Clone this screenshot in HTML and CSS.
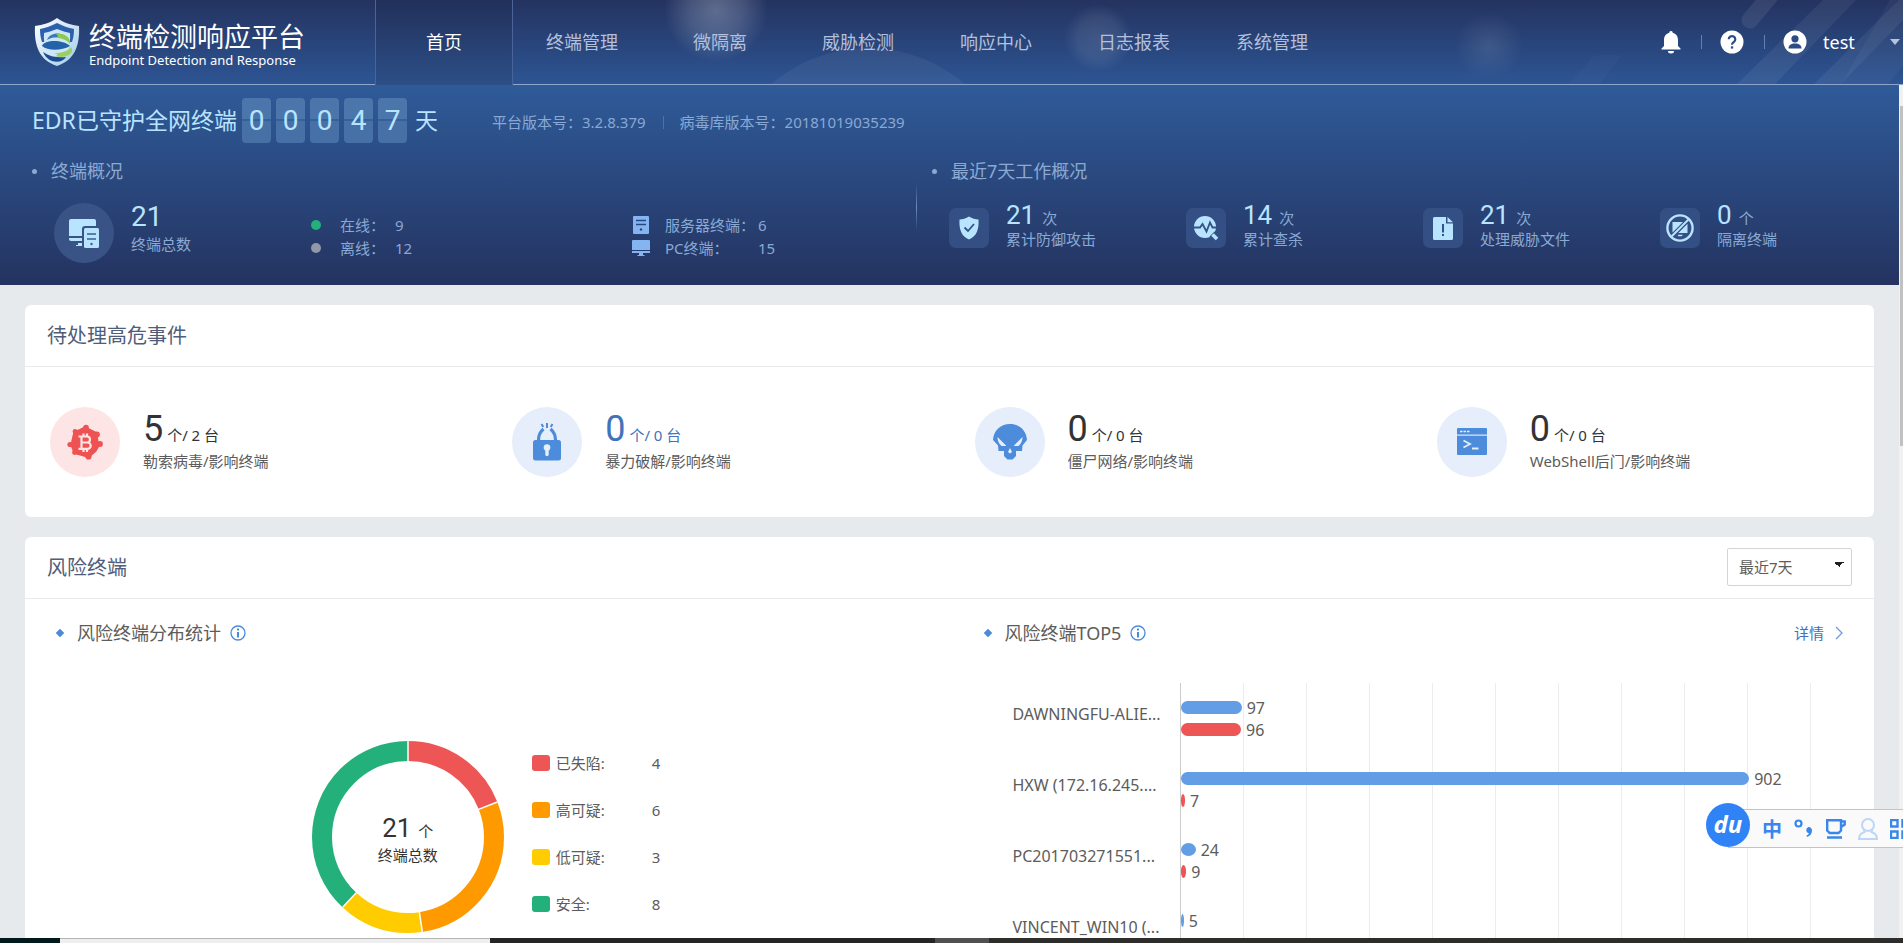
FILE: index.html
```html
<!DOCTYPE html>
<html lang="zh-CN">
<head>
<meta charset="utf-8">
<title>终端检测响应平台</title>
<link rel="stylesheet" href="styles.css">
</head>
<body>
<header class="topbar">
  <svg class="topbar-decor" viewBox="0 0 1903 84" preserveAspectRatio="none" aria-hidden="true">
    <defs>
      <radialGradient id="glow"><stop offset="0" stop-color="#fff" stop-opacity=".26"/><stop offset=".5" stop-color="#fff" stop-opacity=".16"/><stop offset="1" stop-color="#fff" stop-opacity="0"/></radialGradient>
      <radialGradient id="glow2"><stop offset="0" stop-color="#fff" stop-opacity=".11"/><stop offset=".6" stop-color="#fff" stop-opacity=".08"/><stop offset="1" stop-color="#fff" stop-opacity="0"/></radialGradient>
      <radialGradient id="glow3"><stop offset="0" stop-color="#fff" stop-opacity=".1"/><stop offset="1" stop-color="#fff" stop-opacity="0"/></radialGradient>
    </defs>
    <circle cx="716" cy="10" r="52" fill="url(#glow)"/>
    <circle cx="1098" cy="38" r="34" fill="url(#glow2)"/>
    <circle cx="1489" cy="46" r="34" fill="url(#glow3)"/>
    <circle cx="868" cy="196" r="148" fill="#fff" fill-opacity=".05"/>
    <path d="M1775 -10L1750 20" stroke="#fff" stroke-opacity=".08" stroke-width="17" stroke-linecap="round"/>
    <path d="M1823 0H1856L1775 84H1737zM1903 0V20L1841 84H1814L1899 0z" fill="#fff" fill-opacity=".06"/>
    <path d="M1903 0V66L1888 84H1841L1890 0z" fill="#fff" fill-opacity=".04"/>
    <path d="M1595 55H1622L1600 84H1568z" fill="#fff" fill-opacity=".02"/>
  </svg>
  <div class="brand">
    <svg class="brand-logo" viewBox="0 0 46 50" aria-hidden="true">
      <defs><linearGradient id="sh" x1="0" y1="0" x2="1" y2="1"><stop offset="0" stop-color="#fff"/><stop offset="1" stop-color="#9fcbe8"/></linearGradient></defs>
      <path d="M23 1C30 6 37 8 45 9C46 28 41 43 23 49C5 43 0 28 1 9C9 8 16 6 23 1z" fill="url(#sh)"/>
      <path d="M23 6C29 9 34 11 40 12C40 18 39 22 38 25H8C7 22 6 18 6 12C12 11 17 9 23 6z" fill="#2c5fae"/>
      <path d="M23 12C28 14 32 15 36 16C37 28 33 40 23 45C13 40 9 28 10 16C14 15 18 14 23 12z" fill="#cfe6f7"/>
      <path d="M13 23C16 15 29 14 35 23C29 20 20 19 13 23z" fill="#3779bd"/>
      <path d="M22 17C31 16 37 21 36 27C32 22 27 21 21 21C24 20 25 19 22 17z" fill="#8ccb4c"/>
      <path d="M8 29C10 23 28 22 36 29C27 34 14 34 8 29z" fill="#2462aa"/>
      <path d="M20 36C28 36 34 34 37 30C42 37 30 42 21 39C25 38 24 37 20 36z" fill="#9bcf63"/>
      <path d="M9 35C16 40 25 41 32 40C28 47 14 47 9 35z" fill="#1d4b93"/>
    </svg>
    <div class="brand-text"><div class="brand-title">终端检测响应平台</div><div class="brand-sub">Endpoint Detection and Response</div></div>
  </div>
  <nav class="nav">
    <a class="nav-item is-active" href="#">首页</a>
    <a class="nav-item" href="#">终端管理</a>
    <a class="nav-item" href="#">微隔离</a>
    <a class="nav-item" href="#">威胁检测</a>
    <a class="nav-item" href="#">响应中心</a>
    <a class="nav-item" href="#">日志报表</a>
    <a class="nav-item" href="#">系统管理</a>
  </nav>
  <div class="tools">
    <button class="tool" aria-label="通知"><svg width="20" height="24" viewBox="0 0 20 24"><path d="M10 1a1.600 1.600 0 0 1 1.700 1.700C15 3.500 17 6.300 17 10v6l2.500 2.500V19.500H.5V18.500L3 16v-6C3 6.300 5 3.500 8.300 2.700A1.600 1.600 0 0 1 10 1zM7 21h6a3 2.500 0 0 1-6 0z" fill="#fff"/></svg></button>
    <button class="tool" aria-label="帮助"><svg width="24" height="24" viewBox="0 0 24 24"><circle cx="12" cy="12" r="11.500" fill="#fff"/><path d="M8.700 9.300a3.300 3.300 0 1 1 5 2.900c-1.200.8-1.700 1.200-1.700 2.600" fill="none" stroke="#2b4c88" stroke-width="2.200"/><rect x="10.900" y="16.300" width="2.300" height="2.300" fill="#2b4c88"/></svg></button>
    <button class="tool user" type="button"><svg width="24" height="24" viewBox="0 0 24 24"><circle cx="12" cy="12" r="11.500" fill="#fff"/><circle cx="12" cy="8.800" r="3.600" fill="#2b4c88"/><path d="M5.500 18.500c0-3.500 2.500-5 6.500-5s6.500 1.500 6.500 5z" fill="#2b4c88"/></svg><span class="user-name">test</span><svg class="user-caret" width="10" height="6" viewBox="0 0 10 6"><path d="M0 0h10L5 6z" fill="#b5c3dd"/></svg></button>
  </div>
</header>

<div class="viewport">
  <main class="content">
    <section class="banner">
      <div class="guard">
        <span class="guard-label">EDR已守护全网终端</span>
        <span class="digits"><span class="digit">0</span><span class="digit">0</span><span class="digit">0</span><span class="digit">4</span><span class="digit">7</span></span>
        <span class="guard-unit">天</span>
        <span class="version">平台版本号：3.2.8.379</span>
        <span class="version version-next">病毒库版本号：20181019035239</span>
      </div>
      <div class="overview">
        <div class="overview-left">
          <h2 class="dot-title">终端概况</h2>
          <div class="terminals">
            <div class="total">
              <span class="total-icon"><svg width="32" height="32" viewBox="0 0 32 32"><path d="M3 2H26a2 2 0 0 1 2 2V9H17a3 3 0 0 0-3 3V19H1V4A2 2 0 0 1 3 2zM1 21H14V24H3A2 2 0 0 1 1 22zM10 26H14V29H8V28H10z" fill="#b9e4ff"/><rect x="16" y="11" width="15" height="20" rx="1.500" fill="#b9e4ff"/><path d="M19 17H28M19 22H28" stroke="#3a5c92" stroke-width="1.500"/><circle cx="23.500" cy="27" r="1.200" fill="#3a5c92"/></svg></span>
              <div class="total-text"><div class="num-xl">21</div><div class="label">终端总数</div></div>
            </div>
            <dl class="pairs status">
              <dt><i class="led led-on"></i>在线：</dt><dd>9</dd>
              <dt><i class="led led-off"></i>离线：</dt><dd>12</dd>
            </dl>
            <dl class="pairs kinds">
              <dt><svg width="18" height="18" viewBox="0 0 18 18"><rect x="1" y="0" width="16" height="18" rx="1" fill="#85b4f3"/><path d="M4 4.500H14M4 8.500H14" stroke="#2b4780" stroke-width="1.500"/><circle cx="9" cy="13.500" r="1.200" fill="#2b4780"/></svg>服务器终端：</dt><dd>6</dd>
              <dt><svg width="18" height="18" viewBox="0 0 18 18"><path d="M1 1H17a1 1 0 0 1 1 1V11H0V2A1 1 0 0 1 1 1zM0 12H18V14H11V16H12.500V17H5.500V16H7V14H0z" fill="#85b4f3"/></svg>PC终端：</dt><dd>15</dd>
            </dl>
          </div>
        </div>
        <div class="overview-right">
          <h2 class="dot-title">最近7天工作概况</h2>
          <div class="works">
            <div class="work"><span class="tile"><svg width="22" height="24" viewBox="0 0 22 24"><path d="M11 0.500C14 2.500 17.500 3.200 20.500 3.500C21 13 19 20 11 23.500C3 20 1 13 1.500 3.500C4.500 3.200 8 2.500 11 .5z" fill="#b9e4ff"/><path d="M6.500 11.500L10 15L16 8" fill="none" stroke="#32528a" stroke-width="1.800"/></svg></span><div><div class="num-l">21<span class="unit">次</span></div><div class="label">累计防御攻击</div></div></div>
            <div class="work"><span class="tile"><svg width="26" height="26" viewBox="0 0 26 26"><circle cx="12" cy="12" r="11" fill="#b9e4ff"/><path d="M0 12.500H7L9.500 9L13.500 16.500L17 7.500L19.500 12.500H24" fill="none" stroke="#32528a" stroke-width="1.800"/><path d="M19 19L24.500 24.500" stroke="#32528a" stroke-width="7"/><path d="M19.500 19.500L24 24" stroke="#b9e4ff" stroke-width="3.600"/></svg></span><div><div class="num-l">14<span class="unit">次</span></div><div class="label">累计查杀</div></div></div>
            <div class="work"><span class="tile"><svg width="20" height="23" viewBox="0 0 20 23"><path d="M1.500 0H13V6.500H20V21.500A1.500 1.500 0 0 1 18.500 23H1.500A1.500 1.500 0 0 1 0 21.500V1.500A1.500 1.500 0 0 1 1.500 0zM14.500 0L20 5.200H14.500z" fill="#b9e4ff"/><path d="M10 7V15.500M10 17V19" stroke="#32528a" stroke-width="2"/></svg></span><div><div class="num-l">21<span class="unit">次</span></div><div class="label">处理威胁文件</div></div></div>
            <div class="work"><span class="tile"><svg width="28" height="28" viewBox="0 0 28 28"><circle cx="14" cy="14" r="12.600" fill="none" stroke="#b9e4ff" stroke-width="2.400"/><path d="M6.500 8H17L6.500 18.500zM21.500 9.800V19H12.300zM11.500 20.800H17L15.500 22.300H12.500z" fill="#b9e4ff"/><path d="M5.500 22.500L22.500 5.500" stroke="#b9e4ff" stroke-width="2"/></svg></span><div><div class="num-l">0<span class="unit">个</span></div><div class="label">隔离终端</div></div></div>
          </div>
        </div>
      </div>
    </section>

    <section class="card">
      <div class="card-head"><h2 class="card-title">待处理高危事件</h2></div>
      <div class="events">
        <a class="event" href="#">
          <span class="event-icon is-danger"><svg width="36" height="36" viewBox="0 0 36 36"><path d="M18 3.500L22 5.500L29 9L30.500 17L32 21L28.500 27L21.500 33L15 31L7.500 29L4.500 21L6 14L7.500 8L13 6z" fill="#ee5252" stroke="#ee5252" stroke-width="2" stroke-linejoin="round"/><g fill="#ee5252"><circle cx="19" cy="3.500" r="2.800"/><circle cx="8" cy="7.500" r="2.400"/><circle cx="30" cy="10.500" r="2.900"/><circle cx="33" cy="20" r="2.900"/><circle cx="3" cy="20.500" r="2.600"/><circle cx="7.500" cy="28.500" r="2.400"/><circle cx="21.500" cy="32.500" r="3.100"/></g><path d="M11.500 12.500H20a3 3 0 0 1 0 6H15H20.500a3.200 3.200 0 0 1 0 6.400H11.500M14.500 12.500V25M16.500 9.500V12M20 9.500V12M16.500 25V28M20 25V28" fill="none" stroke="#fde5e5" stroke-width="2.200"/></svg></span>
          <div><div class="event-num"><b class="num-xxl">5</b> 个/ 2 台</div><div class="event-label">勒索病毒/影响终端</div></div>
        </a>
        <a class="event is-hover" href="#">
          <span class="event-icon"><svg width="28" height="38" viewBox="0 0 28 38"><rect x="0" y="17" width="28" height="20.500" rx="2.500" fill="#4c8cdb"/><path d="M5.500 17C5.500 11 7.500 8.500 10.500 6M22.500 17C22.500 11 20.500 8.500 17.500 6" fill="none" stroke="#4c8cdb" stroke-width="3.200"/><path d="M8.500 1L10.300 4M14 0V5M19.500 1L17.700 4" stroke="#4c8cdb" stroke-width="2"/><circle cx="14" cy="24.500" r="3.300" fill="#e5eefa"/><path d="M12.300 26H15.700V31.500A1.700 1.700 0 0 1 12.300 31.500z" fill="#e5eefa"/></svg></span>
          <div><div class="event-num"><b class="num-xxl">0</b> 个/ 0 台</div><div class="event-label">暴力破解/影响终端</div></div>
        </a>
        <a class="event" href="#">
          <span class="event-icon"><svg width="36" height="36" viewBox="0 0 36 36"><path d="M18 0C28 0 34.500 7 35 16L30.500 21.500L30 27H24V32L20.500 35.500H15.500L12 32V27H6.500L6 21.500L1 16C1.500 7 8 0 18 0z" fill="#4c8cdb"/><path d="M5.500 13L14 21.500V22H9.500C7 20 5.500 17 5.500 13zM30.500 13L22 21.500V22H26.500C29 20 30.500 17 30.500 13zM18 24L20 28L18 29.600L16 28z" fill="#e5eefa"/></svg></span>
          <div><div class="event-num"><b class="num-xxl">0</b> 个/ 0 台</div><div class="event-label">僵尸网络/影响终端</div></div>
        </a>
        <a class="event" href="#">
          <span class="event-icon"><svg width="30" height="28" viewBox="0 0 30 28"><path d="M1 0H29a1 1 0 0 1 1 1V6H0V1A1 1 0 0 1 1 0zM0 8H30V26a1 1 0 0 1-1 1H1a1 1 0 0 1-1-1z" fill="#4c8cdb"/><path d="M0 6.800H30" stroke="#8db6ea" stroke-width="1.500"/><path d="M3 3.500H5.500M6.500 3.500H9M10 3.500H12.500" stroke="#e5eefa" stroke-width="1.600"/><path d="M6.500 12.500L13 16L6.500 19.500M15 20.500H21.500" fill="none" stroke="#e5eefa" stroke-width="1.800"/></svg></span>
          <div><div class="event-num"><b class="num-xxl">0</b> 个/ 0 台</div><div class="event-label">WebShell后门/影响终端</div></div>
        </a>
      </div>
    </section>

    <section class="card">
      <div class="card-head">
        <h2 class="card-title">风险终端</h2>
        <select class="range" aria-label="时间范围"><option>最近7天</option></select>
      </div>
      <div class="risk">
        <div class="panel">
          <h3 class="panel-title"><i class="diamond"></i>风险终端分布统计<svg class="info" width="16" height="16" viewBox="0 0 16 16"><circle cx="8" cy="8" r="7" fill="none" stroke="#4b8ad8" stroke-width="1.300"/><path d="M8 3.500V5.500M8 7V12.500" stroke="#4b8ad8" stroke-width="2"/></svg></h3>
          <div class="distribution">
            <div class="donut">
              <svg width="192" height="192" viewBox="0 0 192 192">
                <g fill="none" stroke-width="20" transform="rotate(-90 96 96)">
                  <circle cx="96" cy="96" r="86" pathLength="21" stroke="#ee5555" stroke-dasharray="4 17"/>
                  <circle cx="96" cy="96" r="86" pathLength="21" stroke="#ff9900" stroke-dasharray="6 15" stroke-dashoffset="-4"/>
                  <circle cx="96" cy="96" r="86" pathLength="21" stroke="#ffcc00" stroke-dasharray="3 18" stroke-dashoffset="-10"/>
                  <circle cx="96" cy="96" r="86" pathLength="21" stroke="#23b07b" stroke-dasharray="8 13" stroke-dashoffset="-13"/>
                </g>
                <g stroke="#fff" stroke-width="1.500">
                  <path d="M96 0V21"/><path d="M96 0V21" transform="rotate(68.600 96 96)"/><path d="M96 0V21" transform="rotate(171.400 96 96)"/><path d="M96 0V21" transform="rotate(222.900 96 96)"/>
                </g>
              </svg>
              <div class="donut-text"><div class="num-l donut-num">21<span class="unit">个</span></div><div>终端总数</div></div>
            </div>
            <ul class="legend">
              <li><i class="swatch sw-red"></i><span>已失陷:</span><span>4</span></li>
              <li><i class="swatch sw-orange"></i><span>高可疑:</span><span>6</span></li>
              <li><i class="swatch sw-yellow"></i><span>低可疑:</span><span>3</span></li>
              <li><i class="swatch sw-green"></i><span>安全:</span><span>8</span></li>
            </ul>
          </div>
        </div>
        <div class="panel panel-top5">
          <h3 class="panel-title"><i class="diamond"></i>风险终端TOP5<svg class="info" width="16" height="16" viewBox="0 0 16 16"><circle cx="8" cy="8" r="7" fill="none" stroke="#4b8ad8" stroke-width="1.300"/><path d="M8 3.500V5.500M8 7V12.500" stroke="#4b8ad8" stroke-width="2"/></svg>
            <a class="more" href="#">详情<svg width="8" height="14" viewBox="0 0 8 14"><path d="M1 1L7 7L1 13" fill="none" stroke="#6f9bd8" stroke-width="1.300"/></svg></a></h3>
          <div class="chart">
            <div class="gridlines" aria-hidden="true"><i></i><i></i><i></i><i></i><i></i><i></i><i></i><i></i><i></i><i></i></div>
            <div class="host"><span class="host-name">DAWNINGFU-ALIE...</span><div class="bars"><div class="bar"><i class="fill" style="width:9.7%"></i>97</div><div class="bar"><i class="fill fill-red" style="width:9.6%"></i>96</div></div></div>
            <div class="host"><span class="host-name">HXW (172.16.245....</span><div class="bars"><div class="bar"><i class="fill" style="width:90.2%"></i>902</div><div class="bar"><i class="fill fill-red fill-tiny" style="width:0.7%"></i>7</div></div></div>
            <div class="host"><span class="host-name">PC201703271551...</span><div class="bars"><div class="bar"><i class="fill fill-tiny" style="width:2.4%"></i>24</div><div class="bar"><i class="fill fill-red fill-tiny" style="width:0.9%"></i>9</div></div></div>
            <div class="host"><span class="host-name">VINCENT_WIN10 (...</span><div class="bars"><div class="bar"><i class="fill fill-tiny" style="width:0.5%"></i>5</div><div class="bar"></div></div></div>
          </div>
        </div>
      </div>
    </section>
  </main>
  <div class="scrollbar" aria-hidden="true"><i class="thumb"></i></div>
</div>

<footer class="taskbar" aria-hidden="true"><i class="task-start"></i><i class="task-search"></i><i class="task-rest"></i><i class="task-app"></i><i class="task-end"></i></footer>

<div class="ime">
  <span class="ime-logo">du</span>
  <span class="ime-zh">中</span>
  <svg width="20" height="20" viewBox="0 0 20 20"><circle cx="4.500" cy="4.500" r="3" fill="none" stroke="#3a86ea" stroke-width="2.200"/><path d="M14.500 8a3.300 3.300 0 0 1 3.500 3.500c0 3.500-2 5.500-5 6.500l-.5-1.500c1.500-.6 2.300-1.300 2.300-2.300A3.200 3.200 0 0 1 14.500 8z" fill="#3a86ea"/></svg>
  <svg width="20" height="20" viewBox="0 0 20 20"><path d="M1.200 1.200H15V11.500L12.500 14H3.700L1.200 11.500zM15 2.500H18.700V5.500L15 8M1 18.500H16" fill="none" stroke="#3a86ea" stroke-width="2.400"/></svg>
  <svg width="20" height="22" viewBox="0 0 20 22"><circle cx="10" cy="7" r="6" fill="none" stroke="#bdd6f7" stroke-width="2"/><path d="M6 12L6.500 14C3 15 1 17 1 21H19C19 17 17 15 13.500 14L14 12" fill="none" stroke="#bdd6f7" stroke-width="2"/></svg>
  <svg width="20" height="20" viewBox="0 0 20 20"><path d="M1 1H7.500V7.500H1zM12.500 1H19V7.500H12.500zM1 12.500H7.500V19H1zM12.500 12.500H19V19H12.500z" fill="none" stroke="#3a86ea" stroke-width="2.400"/></svg>
</div>
</body>
</html>
```
FILE: styles.css
```css
* { box-sizing: border-box; }
body {
  margin: 0;
  height: 100vh;
  display: flex;
  flex-direction: column;
  overflow: hidden;
  background: #e6eaed;
  color: #5c5c5c;
  font: 15px/20px "Noto Sans", "Noto Sans CJK SC", sans-serif;
}
h2, h3, dl, dd, ul { margin: 0; padding: 0; font-weight: normal; }
a { color: inherit; text-decoration: none; }
button { border: 0; background: none; padding: 0; color: inherit; font: inherit; }
svg { display: block; flex: none; }

/* header */
.topbar {
  position: relative;
  flex: none;
  display: flex;
  height: 85px;
  background: linear-gradient(#243360, #2d5594);
  border-bottom: 1px solid #8fa3cb;
}
.topbar-decor { position: absolute; inset: 0; width: 100%; height: 100%; }
.brand { position: relative; display: flex; align-items: center; gap: 9px; width: 375px; padding-left: 34px; }
.brand-logo { width: 46px; height: 50px; }
.brand-text { color: #fff; padding-top: 10px; }
.brand-title { font: 27px/26px "Liberation Sans", "Noto Sans CJK SC", sans-serif; white-space: nowrap; }
.brand-sub { font-size: 13px; line-height: 18px; white-space: nowrap; }
.nav { position: relative; display: flex; }
.nav-item {
  width: 138px;
  line-height: 84px;
  text-align: center;
  font-size: 18px;
  color: #b4c0dc;
}
.nav-item.is-active {
  height: 85px;
  color: #fff;
  background: linear-gradient(#22305b, #2c4f87);
  border: solid #4a6499;
  border-width: 0 1px;
}
.tools { position: relative; display: flex; align-items: center; margin-left: auto; padding-right: 3px; }
.tool { display: flex; align-items: center; }
.tool + .tool { margin-left: 20px; padding-left: 19px; background: linear-gradient(#6480b2, #6480b2) left center / 1px 14px no-repeat; }
.user-name { margin-left: 16px; width: 67px; text-align: left; font-size: 18px; color: #fff; }

/* scrolling area */
.viewport { flex: 1; min-height: 0; display: flex; }
.content { flex: 1; min-width: 0; overflow: hidden; }
.scrollbar { width: 4px; padding: 21px 0 0 1px; background: #f1f1f1; }
.thumb { display: block; height: 340px; background: #c1c1c1; }

/* banner */
.banner { height: 200px; padding: 13px 0 0 32px; background: linear-gradient(#2f5b99, #243360); color: #89a9d5; }
.guard { display: flex; align-items: center; height: 45px; }
.guard-label, .guard-unit { font-size: 23px; line-height: 30px; padding-bottom: 2px; color: #b9e4ff; }
.guard-label { width: 210px; white-space: nowrap; }
.digits { display: flex; gap: 5px; }
.digit {
  width: 29px;
  height: 45px;
  border-radius: 4px;
  background: linear-gradient(#4b76ab 0 21px, #34609c 21px 23px, #4670a6 23px);
  font: 28px/45px Roboto, sans-serif;
  text-align: center;
  color: #b9e4ff;
}
.guard-unit { margin-left: 8px; width: 77px; }
.version { padding-top: 3px; }
.version-next { margin-left: 17px; padding-left: 17px; background: linear-gradient(#4a72ac, #4a72ac) left 7px / 1px 13px no-repeat; }
.overview { display: flex; margin-top: 16px; }
.overview-left { width: 884px; }
.overview-right { position: relative; flex: 1; padding-left: 16px; }
.overview-right::before {
  content: "";
  position: absolute;
  left: 0;
  top: 24px;
  width: 1px;
  height: 48px;
  background: linear-gradient(transparent, #6b8abc, transparent);
}
.dot-title { display: flex; align-items: center; gap: 14px; font-size: 18px; line-height: 24px; color: #8aa9d3; }
.dot-title::before { content: ""; width: 5px; height: 5px; border-radius: 50%; background: #8aa9d3; }
.terminals { display: flex; align-items: center; margin-top: 19px; padding-left: 22px; }
.total { display: flex; align-items: center; gap: 17px; width: 257px; height: 62px; }
.total-icon { display: grid; place-items: center; width: 60px; height: 60px; border-radius: 50%; background: #3a5387; }
.total-text { padding-bottom: 5px; }
.num-xl, .num-l { font-family: Roboto, sans-serif; color: #b9e4ff; }
.num-xl { font-size: 28px; line-height: 22px; margin-bottom: 5px; }
.num-l { font-size: 26px; line-height: 24px; white-space: nowrap; }
.unit { margin-left: 7px; font: 15px/20px "Noto Sans CJK SC", sans-serif; color: #89a9d5; }
.label { line-height: 22px; }
.pairs { display: grid; grid-template-columns: auto 1fr; row-gap: 1px; line-height: 22px; padding-top: 6px; }
.pairs dt { display: flex; align-items: center; white-space: nowrap; }
.status { grid-template-columns: 84px 1fr; width: 321px; }
.status dt { gap: 19px; }
.kinds { grid-template-columns: 126px 1fr; }
.kinds dt { gap: 15px; }
.led { width: 10px; height: 10px; border-radius: 50%; }
.led-on { background: #23b07b; }
.led-off { background: #9297a9; }
.works { display: grid; grid-template-columns: repeat(4, 1fr); margin-top: 20px; padding: 0 2px 0 17px; }
.work { display: flex; gap: 17px; }
.tile { display: grid; place-items: center; width: 40px; height: 40px; margin-top: 5px; border-radius: 7px; background: #344f83; }

/* cards */
.card { margin: 20px 25px 0; background: #fff; border-radius: 6px; }
.card-head { display: flex; align-items: center; justify-content: space-between; height: 62px; padding: 0 22px; border-bottom: 1px solid #e8eaec; }
.card-title { font-size: 20px; line-height: 28px; color: #4f5d78; }
.range {
  appearance: none;
  width: 125px;
  height: 38px;
  margin-bottom: 2px;
  padding: 0 11px;
  border: 1px solid #d2d4d8;
  border-radius: 2px;
  background:
    linear-gradient(to bottom left, #222 50%, transparent 50%) right 12px top 13px / 5px 5px no-repeat,
    linear-gradient(to bottom right, #222 50%, transparent 50%) right 7px top 13px / 5px 5px no-repeat,
    #fff;
  font: inherit;
  color: #5c5c5c;
}
.events { display: grid; grid-template-columns: repeat(4, 1fr); height: 150px; align-items: center; }
.event { display: flex; align-items: center; gap: 23px; padding-left: 25px; }
.event-icon { display: grid; place-items: center; width: 70px; height: 70px; border-radius: 50%; background: #e5eefa; }
.event-icon.is-danger { background: #fde5e5; }
.event-num { font-size: 15px; line-height: 32px; color: #333; }
.num-xxl { font: 36px/32px Roboto, sans-serif; }
.is-hover .event-num { color: #4272b8; }
.event-label { line-height: 20px; }

/* risk */
.risk { display: grid; grid-template-columns: 1fr 1fr; }
.panel-title { display: flex; align-items: center; height: 28px; margin-top: 20px; padding-left: 32px; font-size: 18px; line-height: 28px; color: #5c5c5c; }
.panel-top5 .panel-title { padding: 0 31px 0 35px; }
.diamond { width: 6px; height: 6px; margin-right: 14px; background: #4b8ad8; transform: rotate(45deg); }
.info { margin-left: 9px; }
.more { display: flex; align-items: center; gap: 11px; margin-left: auto; font-size: 15px; color: #4272b8; }
.distribution { display: flex; justify-content: center; align-items: center; gap: 28px; margin-top: 92px; padding-left: 10px; }
.donut { position: relative; }
.donut-text { position: absolute; inset: 0; display: flex; flex-direction: column; align-items: center; justify-content: center; gap: 4px; padding-top: 8px; color: #333; }
.donut-num, .donut-num .unit { color: #333; }
.legend { list-style: none; padding-bottom: 7px; }
.legend li { display: grid; grid-template-columns: 18px 96px 15px; column-gap: 6px; align-items: center; height: 47px; }
.legend li span:last-child { margin-left: -6px; }
.swatch { width: 18px; height: 16px; border-radius: 3px; }
.sw-red { background: #ee5555; }
.sw-orange { background: #ff9900; }
.sw-yellow { background: #ffcc00; }
.sw-green { background: #23b07b; }
.chart { position: relative; margin: 36px 63px 0; }
.gridlines { position: absolute; inset: 0 0 0 167px; display: grid; grid-template-columns: repeat(10, 1fr); border-right: 1px solid #ececec; }
.gridlines i { border-left: 1px solid #ececec; }
.gridlines i:first-child { border-color: #ccc; }
.host { position: relative; display: grid; grid-template-columns: 168px 1fr; align-items: center; height: 71px; }
.host-name { padding-bottom: 9px; font-size: 16px; white-space: nowrap; }
.bars { min-width: 0; }
.bar { display: flex; align-items: center; gap: 5px; height: 22px; font-size: 16px; }
.fill { height: 13px; border-radius: 7px; background: #629de6; }
.fill-red { background: #ee5555; }
.fill-tiny { border-radius: 50%; }

/* desktop strip */
.taskbar { flex: none; display: flex; height: 5px; }
.task-start { width: 60px; background: #02191c; }
.task-search { width: 430px; background: #eee; border-top: 1px solid #b5b5b5; }
.task-rest { width: 445px; background: #252525; }
.task-app { width: 54px; background: #505050; }
.task-end { flex: 1; background: #2d2d2b; }

/* floating input-method bar */
.ime {
  position: absolute;
  right: 0;
  bottom: 95px;
  display: flex;
  align-items: center;
  gap: 12px;
  width: 175px;
  height: 39px;
  background: #fafafa;
  border: solid #a9c8ee;
  border-width: 1px 0;
}
.ime-logo {
  flex: none;
  width: 44px;
  height: 44px;
  margin: -7px 0 0 -22px;
  border-radius: 50%;
  background: #2f83f7;
  color: #fff;
  font: italic bold 24px/42px "Open Sans", sans-serif;
  text-align: center;
}
.ime-zh { flex: none; font: bold 20px/36px "Noto Sans CJK SC", sans-serif; color: #3a86ea; }
```
